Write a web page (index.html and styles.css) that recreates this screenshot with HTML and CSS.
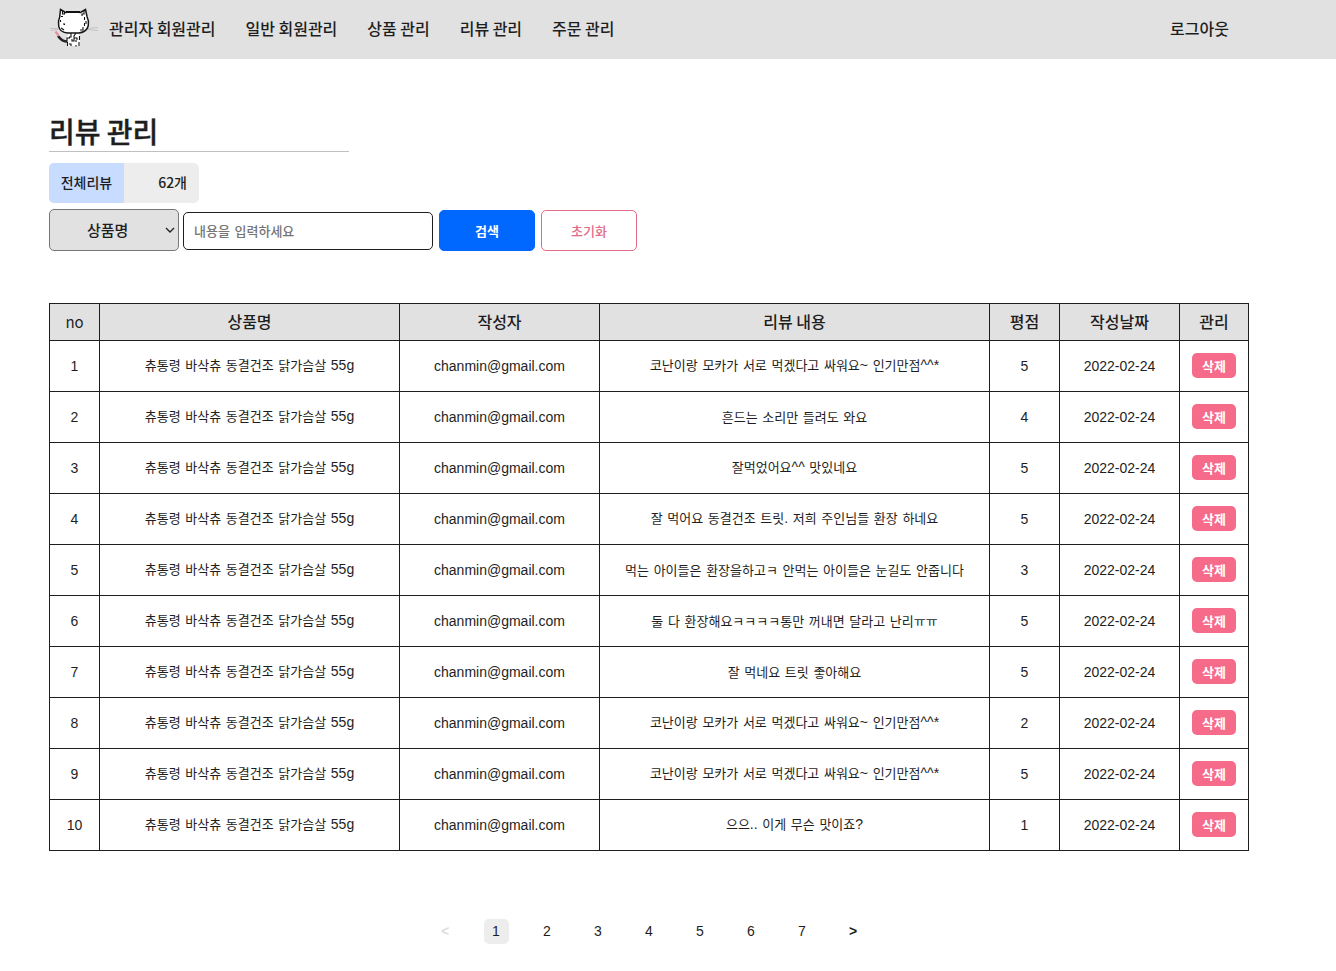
FILE: index.html
```html
<!DOCTYPE html>
<html lang="ko">
<head>
<meta charset="utf-8">
<title>리뷰 관리</title>
<link rel="stylesheet" href="styles.css">
</head>
<body>
<header class="topbar">
  <svg class="logo" viewBox="49 0 50 59" width="50" height="59">
    <path d="M50 28.500h8M51 30.500l7-1M88 28.500l10-1M88 29.500l10 1" fill="none" stroke="#c4c2c2" stroke-width="1"/>
    <path d="M68 41.500c-6 .5-8-3-10-5.500" fill="none" stroke="#2a2529" stroke-width="2.600"/>
    <path d="M55.500 31.500l3 4" fill="none" stroke="#e8909c" stroke-width="2.200"/>
    <path d="M69 33l8-.5 3 3.500v10H67v-9z" fill="#fff"/>
    <path d="M60.500 9.500l5 3q7.500-1.500 15 0l5-3 1.500 7q2 4 1.300 9-1.300 6.500-9.300 7.500H68q-8.500-.5-9.300-7-1-5 1-9z" fill="#fff" stroke="#161616" stroke-width="1.500"/>
    <path d="M66 12h14" fill="none" stroke="#111" stroke-width="2"/>
    <path d="M62.500 11v3h2v-2M61 16.500h2M84 11v3h-2v2M84.500 17v3M60.500 20v2M63 24h1.500v1M86 21v3M84.500 23v3M83 27v3h-3M61 28l3 2M71 33v4h-2M76 33l-2 3v2M70 38h-3v3M72 39v2h2v-3h3v2M67.500 41.500v4.500M69 44h2v2M76 40v2M79.500 36v4M79 42v4M76 45v1.500" fill="none" stroke="#111" stroke-width="1.100"/>
  </svg>
  <nav class="menu">
    <a>관리자 회원관리</a><a>일반 회원관리</a><a>상품 관리</a><a>리뷰 관리</a><a>주문 관리</a>
  </nav>
  <a class="logout">로그아웃</a>
</header>
<main class="page">
  <h1 class="title">리뷰 관리</h1>
  <div class="count"><span class="count-label">전체리뷰</span><span class="count-value">62개</span></div>
  <form class="search">
    <div class="select"><span>상품명</span>
      <svg class="chevron" width="10" height="8" viewBox="0 0 10 8"><path d="M1 2l4 4 4-4" fill="none" stroke="#222" stroke-width="1.300"/></svg>
    </div>
    <input class="keyword" type="text" placeholder="내용을 입력하세요">
    <button class="btn submit" type="button">검색</button>
    <button class="btn reset" type="button">초기화</button>
  </form>
  <table class="reviews">
    <colgroup><col class="c-no"><col class="c-product"><col class="c-writer"><col class="c-content"><col class="c-score"><col class="c-date"><col class="c-manage"></colgroup>
    <thead><tr><th class="head-no">no</th><th>상품명</th><th>작성자</th><th>리뷰 내용</th><th>평점</th><th>작성날짜</th><th>관리</th></tr></thead>
    <tbody>
      <tr><td class="latin">1</td><td>츄통령 바삭츄 동결건조 닭가슴살 <span class="latin">55g</span></td><td class="latin">chanmin@gmail.com</td><td>코난이랑 모카가 서로 먹겠다고 싸워요<span class="latin">~</span> 인기만점<span class="latin">^^*</span></td><td class="latin">5</td><td class="latin">2022-02-24</td><td><button class="delete">삭제</button></td></tr>
      <tr><td class="latin">2</td><td>츄통령 바삭츄 동결건조 닭가슴살 <span class="latin">55g</span></td><td class="latin">chanmin@gmail.com</td><td>흔드는 소리만 들려도 와요</td><td class="latin">4</td><td class="latin">2022-02-24</td><td><button class="delete">삭제</button></td></tr>
      <tr><td class="latin">3</td><td>츄통령 바삭츄 동결건조 닭가슴살 <span class="latin">55g</span></td><td class="latin">chanmin@gmail.com</td><td>잘먹었어요<span class="latin">^^</span> 맛있네요</td><td class="latin">5</td><td class="latin">2022-02-24</td><td><button class="delete">삭제</button></td></tr>
      <tr><td class="latin">4</td><td>츄통령 바삭츄 동결건조 닭가슴살 <span class="latin">55g</span></td><td class="latin">chanmin@gmail.com</td><td>잘 먹어요 동결건조 트릿<span class="latin">.</span> 저희 주인님들 환장 하네요</td><td class="latin">5</td><td class="latin">2022-02-24</td><td><button class="delete">삭제</button></td></tr>
      <tr><td class="latin">5</td><td>츄통령 바삭츄 동결건조 닭가슴살 <span class="latin">55g</span></td><td class="latin">chanmin@gmail.com</td><td>먹는 아이들은 환장을하고ㅋ 안먹는 아이들은 눈길도 안줍니다</td><td class="latin">3</td><td class="latin">2022-02-24</td><td><button class="delete">삭제</button></td></tr>
      <tr><td class="latin">6</td><td>츄통령 바삭츄 동결건조 닭가슴살 <span class="latin">55g</span></td><td class="latin">chanmin@gmail.com</td><td>둘 다 환장해요ㅋㅋㅋㅋ통만 꺼내면 달라고 난리ㅠㅠ</td><td class="latin">5</td><td class="latin">2022-02-24</td><td><button class="delete">삭제</button></td></tr>
      <tr><td class="latin">7</td><td>츄통령 바삭츄 동결건조 닭가슴살 <span class="latin">55g</span></td><td class="latin">chanmin@gmail.com</td><td>잘 먹네요 트릿 좋아해요</td><td class="latin">5</td><td class="latin">2022-02-24</td><td><button class="delete">삭제</button></td></tr>
      <tr><td class="latin">8</td><td>츄통령 바삭츄 동결건조 닭가슴살 <span class="latin">55g</span></td><td class="latin">chanmin@gmail.com</td><td>코난이랑 모카가 서로 먹겠다고 싸워요<span class="latin">~</span> 인기만점<span class="latin">^^*</span></td><td class="latin">2</td><td class="latin">2022-02-24</td><td><button class="delete">삭제</button></td></tr>
      <tr><td class="latin">9</td><td>츄통령 바삭츄 동결건조 닭가슴살 <span class="latin">55g</span></td><td class="latin">chanmin@gmail.com</td><td>코난이랑 모카가 서로 먹겠다고 싸워요<span class="latin">~</span> 인기만점<span class="latin">^^*</span></td><td class="latin">5</td><td class="latin">2022-02-24</td><td><button class="delete">삭제</button></td></tr>
      <tr><td class="latin">10</td><td>츄통령 바삭츄 동결건조 닭가슴살 <span class="latin">55g</span></td><td class="latin">chanmin@gmail.com</td><td>으으<span class="latin">..</span> 이게 무슨 맛이죠<span class="latin">?</span></td><td class="latin">1</td><td class="latin">2022-02-24</td><td><button class="delete">삭제</button></td></tr>
    </tbody>
  </table>
  <nav class="pager">
    <a class="disabled">&lt;</a><a class="current">1</a><a>2</a><a>3</a><a>4</a><a>5</a><a>6</a><a>7</a><a class="next">&gt;</a>
  </nav>
</main>
</body>
</html>
```
FILE: styles.css
```css
* { box-sizing: border-box; }
body {
  margin: 0;
  background: #fff;
  color: #1e1e1e;
  font-family: "Noto Sans CJK KR", sans-serif;
  font-size: 13px;
}
button, input { font-family: inherit; }
.topbar {
  display: flex;
  align-items: center;
  height: 59px;
  padding: 0 107px 0 49px;
  background: #e1e1e1;
  font-size: 16px;
  font-weight: 500;
  word-spacing: -1px;
}
.logo { flex: none; }
.menu { display: flex; gap: 30px; margin-left: 10px; padding-bottom: 4px; }
.logout { margin-left: auto; padding-bottom: 4px; }
.page { width: 1200px; margin-left: 49px; padding-top: 52px; }
.title {
  width: 300px;
  height: 41px;
  margin: 0;
  border-bottom: 1px solid #c0c0c0;
  font-size: 28px;
  font-weight: 500;
  line-height: 40px;
  word-spacing: -1.5px;
  -webkit-text-stroke: 0.4px #1e1e1e;
}
.count {
  display: flex;
  width: 150px;
  height: 40px;
  margin-top: 11px;
  border-radius: 5px;
  background: #ededed;
  overflow: hidden;
  font-size: 14px;
  font-weight: 500;
  line-height: 38px;
}
.count-label { width: 75px; background: #c8dcff; text-align: center; }
.count-value { flex: 1; padding-right: 12px; text-align: right; }
.search { display: flex; align-items: center; height: 42px; margin-top: 6px; }
.select {
  display: flex;
  align-items: center;
  width: 130px;
  height: 42px;
  padding: 0 3px 2px 37px;
  border: 1px solid #777;
  border-radius: 5px;
  background: #e1e1e1;
  font-size: 15px;
  font-weight: 500;
}
.chevron { margin: 2px 0 0 auto; }
.keyword {
  width: 250px;
  height: 38px;
  margin: 2px 0 0 4px;
  padding: 0 10px 2px;
  border: 1px solid #1e1e1e;
  border-radius: 5px;
  font-size: 13px;
  font-weight: 500;
  word-spacing: 1px;
}
.keyword::placeholder { color: #757575; }
.btn {
  width: 96px;
  height: 41px;
  margin: 1px 0 0 6px;
  padding: 0 0 1px;
  border: 1px solid #0068ff;
  border-radius: 5px;
  font-size: 13px;
  font-weight: 500;
}
.submit { background: #0068ff; color: #fff; font-weight: 700; }
.reset { border-color: #e06c88; background: #fff; color: #e06c88; }
.reviews {
  width: 1200px;
  margin-top: 52px;
  border-collapse: collapse;
  table-layout: fixed;
  text-align: center;
}
.c-no { width: 50px; }
.c-product { width: 300px; }
.c-writer { width: 200px; }
.c-content { width: 390px; }
.c-score { width: 70px; }
.c-date { width: 120px; }
.c-manage { width: 69px; }
.reviews th, .reviews td { padding: 0 0 2px; border: 1px solid #1e1e1e; }
.reviews th { height: 37px; background: #e1e1e1; font-size: 16px; font-weight: 500; line-height: 22px; word-spacing: -1px; }
.reviews .head-no { padding: 0; font-size: 15px; font-weight: 400; }
.reviews td { height: 51px; line-height: 19px; word-spacing: 1px; }
.latin { font-family: "Liberation Sans", sans-serif; font-size: 14px; }
.reviews td.latin { padding: 0; }
.delete {
  display: block;
  width: 44px;
  height: 25px;
  margin: 0 auto;
  padding: 0;
  border: 0;
  border-radius: 5px;
  background: #f76b8a;
  color: #fff;
  font-size: 13px;
  font-weight: 700;
  line-height: 25px;
}
.pager { display: flex; justify-content: center; gap: 26px; margin-top: 68px; }
.pager a {
  width: 25px;
  height: 25px;
  border-radius: 5px;
  text-align: center;
  font-family: "Liberation Sans", sans-serif;
  font-size: 14px;
  line-height: 25px;
}
.pager .current { background: #ededed; }
.pager .disabled { color: #dedede; font-weight: 700; }
.pager .next { font-weight: 700; }
```
